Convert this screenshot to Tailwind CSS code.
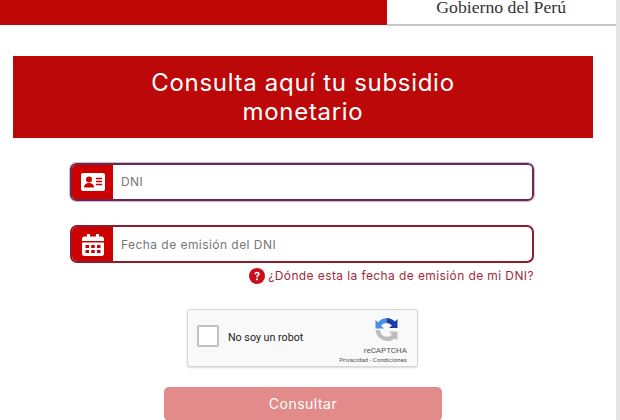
<!DOCTYPE html>
<html lang="es">
<head>
  <meta charset="UTF-8" />
  <title>Consulta subsidio</title>
  <script src="https://cdn.jsdelivr.net/npm/@tailwindcss/browser@4"></script>
</head>
<body class="bg-white font-['Inter',sans-serif] w-[620px] h-[420px] overflow-hidden">
  <div class="flex h-[420px]">
    <div class="w-[616px] h-[420px] overflow-hidden">

      <!-- Cabecera -->
      <header class="flex h-[26px]">
        <div class="w-[387px] h-[25px] bg-[#c00707]"></div>
        <div class="flex-1 h-[26px] flex justify-end items-start pr-[50px] border-b-2 border-[#c8c8c8]">
          <span class="font-['Liberation_Serif',serif] text-[17.700px] leading-[14px] text-[#333]">Gobierno del Perú</span>
        </div>
      </header>

      <!-- Titulo -->
      <div class="mt-[30px] ml-[13px] w-[580px] h-[82px] bg-[#bc0808] flex items-center justify-center text-center">
        <h1 class="text-[24px] leading-[29px] tracking-[0.7px] text-white w-[340px]">Consulta aquí tu subsidio monetario</h1>
      </div>

      <!-- Formulario -->
      <form class="mt-[25px] ml-[70px] w-[464px]">
        <div class="flex h-[38px] rounded-[6px] border-2 border-[#6e2a45] bg-white overflow-hidden outline outline-1 outline-[#c9b8ea]">
          <div class="w-[41px] bg-[#cc0000] flex items-center justify-center shrink-0">
            <svg width="24" height="18" viewBox="0 0 24 18">
              <rect width="24" height="18" rx="2" fill="#fff" />
              <circle cx="8" cy="6.5" r="3" fill="#cc0000" />
              <path d="M3 14.5c0-3 2-4.5 5-4.5s5 1.500 5 4.500z" fill="#cc0000" />
              <path d="M15 5.500h6M15 8.500h6M15 11.500h6" stroke="#cc0000" stroke-width="1.300" />
            </svg>
          </div>
          <div class="pl-[8px] flex items-center text-[12px] tracking-[0.45px] text-[#777]">DNI</div>
        </div>

        <div class="mt-[24px] flex h-[38px] rounded-[7px] border-2 border-[#8e1c2c] bg-white overflow-hidden">
          <div class="w-[41px] bg-[#cc0000] flex items-center justify-center shrink-0">
            <svg width="22" height="23" viewBox="0 0 22 23">
              <path d="M0 6a2.500 2.500 0 0 1 2.500-2.500H5V1h3v2.500h6V1h3v2.500h2.500A2.500 2.500 0 0 1 22 6v2H0z" fill="#fff" />
              <path d="M0 9.500h22V20.500A2.500 2.500 0 0 1 19.500 23h-17A2.500 2.500 0 0 1 0 20.500z" fill="#fff" />
              <g fill="#cc0000">
                <rect x="3.500" y="12" width="3.500" height="3" /><rect x="9.250" y="12" width="3.500" height="3" /><rect x="15" y="12" width="3.500" height="3" />
                <rect x="3.500" y="17" width="3.500" height="3" /><rect x="9.250" y="17" width="3.500" height="3" /><rect x="15" y="17" width="3.500" height="3" />
              </g>
            </svg>
          </div>
          <div class="pl-[8px] pt-[1px] flex items-center text-[12px] tracking-[0.45px] text-[#777]">Fecha de emisión del DNI</div>
        </div>

        <div class="mt-[5px] flex justify-end items-center gap-[3px] text-[12px] leading-[16px] tracking-[0.4px] text-[#a5283a]">
          <svg width="16" height="16" viewBox="0 0 16 16">
            <circle cx="8" cy="8" r="8" fill="#c8101a" />
            <path d="M5.400 6.200c0-1.500 1.200-2.500 2.700-2.500s2.600.9 2.600 2.200c0 1.900-2 1.900-2 3.300H7.100c0-2.200 1.900-2.200 1.900-3.200 0-.5-.4-.8-.9-.8-.6 0-1 .4-1 1z" fill="#fff" />
            <rect x="7.100" y="10.400" width="1.700" height="1.800" fill="#fff" />
          </svg>
          <span>¿Dónde esta la fecha de emisión de mi DNI?</span>
        </div>

        <!-- reCAPTCHA -->
        <div class="mt-[25px] ml-[117px] w-[231px] h-[58px] bg-[#f9f9f9] border border-[#d6d6d6] rounded-[3px] shadow-[0_1px_2px_rgba(0,0,0,0.15)] flex font-['Roboto',sans-serif]">
          <div class="ml-[9px] mt-[15px] w-[22px] h-[22px] bg-white border-2 border-[#c1c1c1] rounded-[2px] shrink-0"></div>
          <span class="ml-[9px] mt-[21px] text-[10.700px] leading-[14px] text-[#222] whitespace-nowrap">No soy un robot</span>
          <div class="ml-auto mr-[10px] flex flex-col items-end">
            <svg class="mt-[8px] mr-[8px]" width="25" height="24" viewBox="0 0 24 24">
              <path d="M12 0V5A7 7 0 0 0 6.500 7.700L9.500 10.500H1V2L3.600 4.300A12 12 0 0 1 12 0z" fill="#4a90e2" />
              <path d="M12 0A12 12 0 0 1 20.400 3.600L23 1V10H14.500L17.500 7.500A7 7 0 0 0 12 5z" fill="#1c3aa9" />
              <path d="M1 12H5.500A7 7 0 0 0 17.500 16.500L14.500 13.500H23V22L20.400 20.400A12 12 0 0 1 1 12z" fill="#bdbdbd" />
            </svg>
            <span class="mt-[4px] text-[8px] leading-[10px] text-[#555]">reCAPTCHA</span>
            <span class="text-[6.200px] leading-[9px] text-[#555] whitespace-nowrap">Privacidad - Condiciones</span>
          </div>
        </div>

        <button type="button" class="block mt-[20px] ml-[94px] w-[278px] h-[34px] pb-[2px] rounded-[5px] bg-[#e38b8b] text-white text-[14px] tracking-[0.5px]">Consultar</button>
      </form>
    </div>
    <div class="w-[4px] h-[420px] bg-[#e6e6e6]"></div>
  </div>
</body>
</html>
